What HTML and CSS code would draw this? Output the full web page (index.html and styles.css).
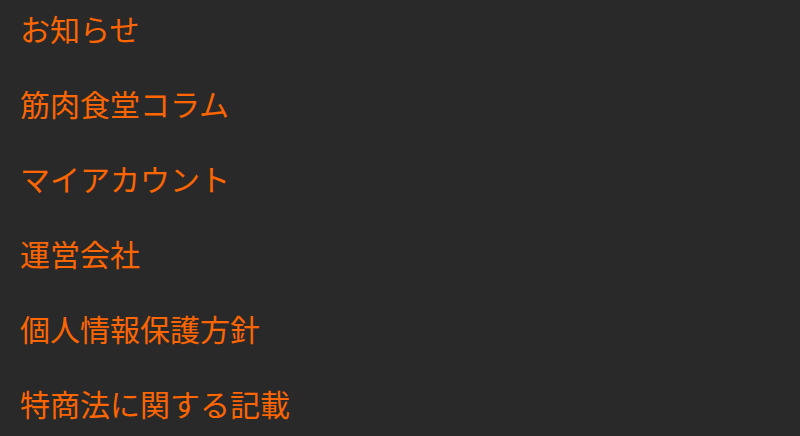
FILE: index.html
```html
<!DOCTYPE html>
<html lang="ja">
<head>
<meta charset="utf-8">
<title>メニュー</title>
<link rel="stylesheet" href="styles.css">
</head>
<body>
<nav class="menu">
  <ul class="menu-list">
    <li class="menu-item"><a href="#">お知らせ</a></li>
    <li class="menu-item"><a href="#">筋肉食堂コラム</a></li>
    <li class="menu-item"><a href="#">マイアカウント</a></li>
    <li class="menu-item"><a href="#">運営会社</a></li>
    <li class="menu-item"><a href="#">個人情報保護方針</a></li>
    <li class="menu-item"><a href="#">特商法に関する記載</a></li>
  </ul>
</nav>
</body>
</html>
```
FILE: styles.css
```css
html, body {
  margin: 0;
  padding: 0;
  background: #292929;
  height: 100%;
  overflow: hidden;
}

.menu {
  font-family: "Noto Sans CJK JP", "Noto Sans", sans-serif;
}

.menu-list {
  list-style: none;
  margin: 0;
  padding: 13px 0 0 20px;
  display: flex;
  flex-direction: column;
  gap: 45px;
}

.menu-item {
  line-height: 30px;
  font-size: 30px;
}

.menu-item a {
  color: #ff6600;
  text-decoration: none;
}
```
